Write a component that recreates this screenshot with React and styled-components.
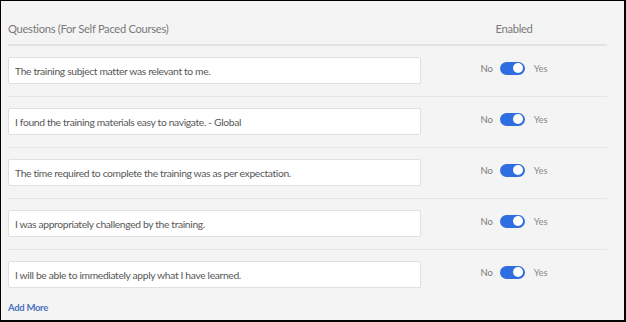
import styled, { createGlobalStyle } from "styled-components";

const Global = createGlobalStyle`
  html, body {
    margin: 0;
    padding: 0;
    background: #f4f4f4;
  }
  * {
    box-sizing: border-box;
  }
`;

const Frame = styled.div`
  width: 626px;
  height: 322px;
  background: #f4f4f4;
  border-top: 1px solid #000;
  border-left: 1px solid #000;
  border-right: 2px solid #000;
  border-bottom: 2px solid #000;
  padding: 0 17px 0 7px;
  font-family: Lato, "Liberation Sans", sans-serif;
  overflow: hidden;
`;

const HeaderRow = styled.div`
  display: grid;
  grid-template-columns: 413px 1fr;
  align-items: center;
  padding: 20px 0 7px;
  border-bottom: 2px solid #e2e2e2;
`;

const HeaderCell = styled.div`
  font-size: 11.2px;
  letter-spacing: -0.3px;
  line-height: 16px;
  color: #7a7a7a;
  text-align: ${(p) => (p.$center ? "center" : "left")};
`;

const Row = styled.div`
  display: grid;
  grid-template-columns: 413px 1fr;
  align-items: start;
  padding: 11px 0 12px;
  border-bottom: ${(p) => (p.$last ? "none" : "1px solid #e6e6e6")};
`;

const QuestionBox = styled.div`
  height: 27px;
  background: #fff;
  border: 1px solid #e0e0e0;
  border-radius: 2px;
  padding: 0 6px;
  display: flex;
  align-items: center;
  font-size: 10.3px;
  letter-spacing: -0.35px;
  color: #575757;
  white-space: nowrap;
`;

const ToggleGroup = styled.div`
  display: flex;
  justify-content: center;
  align-items: center;
  padding-top: 3px;
  height: 16px;
  box-sizing: content-box;
`;

const Label = styled.span`
  font-size: 9.5px;
  letter-spacing: -0.1px;
  color: ${(p) => (p.$dim ? "#8a8a8a" : "#7a7a7a")};
  margin: ${(p) => p.$margin};
`;

const Switch = styled.span`
  position: relative;
  display: inline-block;
  width: 25px;
  height: 13px;
  border-radius: 7px;
  background: ${(p) => (p.$on ? "#2f6ee0" : "#c8c8c8")};
`;

const Knob = styled.span`
  position: absolute;
  top: 1.5px;
  right: ${(p) => (p.$on ? "2px" : "13px")};
  width: 10px;
  height: 10px;
  border-radius: 50%;
  background: #fff;
`;

const AddMore = styled.a`
  display: block;
  margin-top: 1px;
  font-size: 9.5px;
  line-height: 14px;
  font-weight: 700;
  letter-spacing: -0.3px;
  color: #4a72c2;
  cursor: pointer;
`;

const questions = [
  "The training subject matter was relevant to me.",
  "I found the training materials easy to navigate. - Global",
  "The time required to complete the training was as per expectation.",
  "I was appropriately challenged by the training.",
  "I will be able to immediately apply what I have learned.",
];

const Toggle = ({ on }) => (
  <ToggleGroup>
    <Label $margin="0 7px 0 0">No</Label>
    <Switch $on={on}>
      <Knob $on={on} />
    </Switch>
    <Label $dim $margin="0 0 0 9px">Yes</Label>
  </ToggleGroup>
);

const App = () => {
  return (
    <>
      <Global />
      <Frame>
        <HeaderRow>
          <HeaderCell>Questions (For Self Paced Courses)</HeaderCell>
          <HeaderCell $center>Enabled</HeaderCell>
        </HeaderRow>
        {questions.map((q, i) => (
          <Row key={q} $last={i === questions.length - 1}>
            <QuestionBox>{q}</QuestionBox>
            <Toggle on />
          </Row>
        ))}
        <AddMore>Add More</AddMore>
      </Frame>
    </>
  );
};

export default App;
